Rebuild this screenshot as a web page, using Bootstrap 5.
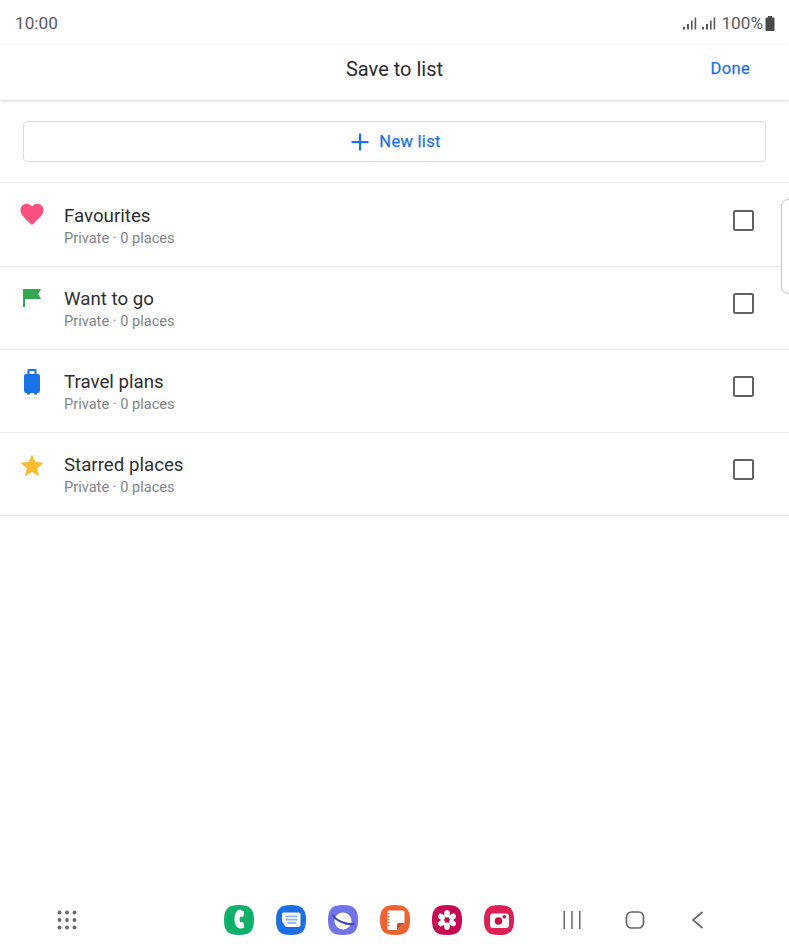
<!DOCTYPE html>
<html lang="en">
<head>
<meta charset="utf-8">
<title>Save to list</title>
<link href="https://cdn.jsdelivr.net/npm/bootstrap@5.3.0/dist/css/bootstrap.min.css" rel="stylesheet">
<style>
html,body{height:100%;}
body{font-family:Roboto,"Liberation Sans",sans-serif;color:#202124;background:#fff;overflow:hidden;}
.page-wrap{height:948px;position:relative;}
.status-bar{height:45px;padding:14px 14px 0 15px;color:#5a5a5a;font-size:17.2px;line-height:18px;}
.status-right{gap:5px;}
.top-bar{height:55px;padding:0 39px 7px 39px;position:relative;box-shadow:0 1px 3px rgba(60,64,67,.22);}
.title-text{font-size:20px;line-height:28px;color:#2a2c2f;position:absolute;left:0;right:0;top:10px;text-align:center;}
.done-link{font-size:16.5px;color:#1a73e8;letter-spacing:.35px;text-decoration:none;margin-left:auto;position:relative;-webkit-text-stroke:.25px #1a73e8;}
.new-wrap{padding:21px 23px 20px 23px;}
.new-btn{height:41px;border:1px solid #d8dade;border-radius:4px;background:#fff;color:#1a73e8;font-size:16.5px;gap:10px;width:100%;padding:1px 0 0 3px;letter-spacing:.3px;-webkit-text-stroke:.25px #1a73e8;}
.list-row{height:83px;border-top:1px solid #e6e6e6;padding:0 36px 0 0;}
.list-row.first-row{height:84px;}
.list-row.last-row{height:84px;border-bottom:1px solid #e6e6e6;}
.list-ico{width:64px;padding-left:20px;padding-top:19px;flex:none;height:100%;}
.first-row .list-ico,.last-row .list-ico{padding-top:20px;}
.list-body{padding-top:20px;}
.first-row .list-body{padding-top:21px;}
.list-name{font-size:18.7px;line-height:24px;color:#2d2f32;}
.list-sub{font-size:14.6px;line-height:20px;color:#80868b;}
.check-box{width:21px;height:21px;border:2.5px solid #5f6368;border-radius:2.5px;margin-top:-10px;margin-right:-1px;}
.first-row .check-box{margin-top:-8px;}
.edge-handle{position:absolute;right:-8px;top:199px;width:16px;height:95px;border:1px solid #c4c4c4;border-radius:7px;background:#fff;}
.dock{height:56px;padding:0 0 0 57px;position:absolute;bottom:0;left:0;right:0;}
.dots-ico{width:20px;flex:none;margin-right:147px;}
.apps-row{gap:22px;margin-right:26px;}
.nav-key{width:63px;flex:none;}
svg{display:block;}
</style>
</head>
<body>
<div class="page-wrap d-flex flex-column">
  <div class="status-bar d-flex justify-content-between align-items-start">
    <span>10:00</span>
    <div class="status-right d-flex align-items-center">
      <svg width="14" height="13" viewBox="0 0 14 13" fill="#5a5a5a"><rect x="0" y="10" width="2" height="2.5"/><rect x="4" y="7" width="2" height="5.5"/><rect x="8" y="3.5" width="1.6" height="9"/><rect x="11.6" y="0.5" width="1.6" height="12"/></svg>
      <svg width="14" height="13" viewBox="0 0 14 13" fill="#5a5a5a"><rect x="0" y="10" width="2" height="2.5"/><rect x="4" y="7" width="2" height="5.5"/><rect x="8" y="3.5" width="1.6" height="9"/><rect x="11.6" y="0.5" width="1.600" height="12"/></svg>
      <span>100%</span>
      <svg class="battery-ico" width="10" height="15" viewBox="0 0 10 15" fill="#4a4a4a" style="margin-left:-3px"><path d="M3 0h4v1.500h1.500q1 0 1 1V14q0 1-1 1h-7q-1 0-1-1V2.500q0-1 1-1H3z"/></svg>
    </div>
  </div>
  <div class="top-bar d-flex align-items-center">
    <div class="title-text">Save to list</div>
    <a class="done-link" href="#">Done</a>
  </div>
  <div class="new-wrap">
    <button type="button" class="btn new-btn d-flex align-items-center justify-content-center">
      <svg width="18" height="18" viewBox="0 0 18 18" fill="#1a73e8"><rect x="8" y="0.500" width="2.200" height="17"/><rect x="0.500" y="8" width="17" height="2.200"/></svg>
      <span>New list</span>
    </button>
  </div>
  <div class="list-row first-row d-flex">
    <div class="list-ico"><svg width="24" height="24" viewBox="0 0 24 24" fill="#f8507f"><path d="M12 23.500 10.300 21.900C4.200 16.400 0.500 13 0.500 8.600 0.500 5 3.300 2.300 6.800 2.300c2 0 3.900.9 5.200 2.400 1.300-1.500 3.200-2.400 5.200-2.400 3.500 0 6.300 2.700 6.300 6.300 0 4.400-3.700 7.800-9.800 13.300z" transform="translate(0 -1.500)"/></svg></div>
    <div class="list-body flex-grow-1"><div class="list-name">Favourites</div><div class="list-sub">Private · 0 places</div></div>
    <div class="align-self-center check-box"></div>
  </div>
  <div class="list-row d-flex">
    <div class="list-ico"><svg width="24" height="24" viewBox="0 0 24 24" fill="#34a853"><path d="M3 3h18l-2.700 5 2.700 5H5v8H3z"/></svg></div>
    <div class="list-body flex-grow-1"><div class="list-name">Want to go</div><div class="list-sub">Private · 0 places</div></div>
    <div class="align-self-center check-box"></div>
  </div>
  <div class="list-row d-flex">
    <div class="list-ico"><svg width="24" height="26" viewBox="0 0 24 26" fill="#1a73e8"><path fill-rule="evenodd" d="M8.500 0h7q1 0 1 1v4H18q2 0 2 2v15q0 2-2 2h-1v1.500h-3V24H10v1.500H7V24H6q-2 0-2-2V7q0-2 2-2h1.500V1q0-1 1-1zM9.500 2v3h5V2z"/></svg></div>
    <div class="list-body flex-grow-1"><div class="list-name">Travel plans</div><div class="list-sub">Private · 0 places</div></div>
    <div class="align-self-center check-box"></div>
  </div>
  <div class="list-row last-row d-flex">
    <div class="list-ico"><svg width="24" height="24" viewBox="0 0 24 24" fill="#fbbc2d"><path d="M12 1.500l3.200 7.600 8.300.7-6.300 5.400 1.900 8.100L12 19.100l-7.100 4.200 1.900-8.100L.5 9.800l8.300-.7z"/></svg></div>
    <div class="list-body flex-grow-1"><div class="list-name">Starred places</div><div class="list-sub">Private · 0 places</div></div>
    <div class="align-self-center check-box"></div>
  </div>
  <div class="edge-handle"></div>
  <div class="dock d-flex align-items-center">
    <div class="dots-ico">
      <svg width="20" height="20" viewBox="0 0 20 20" fill="#666"><circle cx="2.500" cy="2.500" r="1.900"/><circle cx="10" cy="2.500" r="1.900"/><circle cx="17.500" cy="2.500" r="1.900"/><circle cx="2.500" cy="10" r="1.900"/><circle cx="10" cy="10" r="1.900"/><circle cx="17.500" cy="10" r="1.900"/><circle cx="2.500" cy="17.500" r="1.900"/><circle cx="10" cy="17.500" r="1.900"/><circle cx="17.500" cy="17.500" r="1.900"/></svg>
    </div>
    <div class="apps-row d-flex">
      <svg width="30" height="30" viewBox="0 0 30 30"><path fill="#0fb06a" d="M15 0c11 0 15 4 15 15s-4 15-15 15S0 26 0 15 4 0 15 0z"/><path fill="#fff" d="M17 5.500l2.500.5q.7.2.7 1l-.6 4q-.1.8-1 .8l-2.600.2c-.5 1.500-.5 3.500 0 5l2.600.2q.9 0 1 .8l.6 4q0 .8-.7 1l-2.500.5c-4 .5-6.500-4-6.500-9.500s2.500-10 6.500-9.500z"/></svg>
      <svg width="30" height="30" viewBox="0 0 30 30"><path fill="#1a6fe6" d="M15 0c11 0 15 4 15 15s-4 15-15 15S0 26 0 15 4 0 15 0z"/><path fill="#fff" d="M6 9q0-1.500 1.500-1.500h15Q24.500 7.500 24.500 9v11q0 2-2 2H11q-1.500 0-2.200-1.300L6 16z"/><path fill="#8ab4f8" d="M9.500 10.500h12v1.700h-12zM9.500 13.800h12v1.700h-12zM11.500 17h8.500v1.700h-8.500z"/></svg>
      <svg width="30" height="30" viewBox="0 0 30 30"><path fill="#7074e6" d="M15 0c11 0 15 4 15 15s-4 15-15 15S0 26 0 15 4 0 15 0z"/><circle cx="15" cy="16" r="8.500" fill="#fff"/><path fill="none" stroke="#4346b4" stroke-width="2" stroke-linecap="round" d="M5 10.500C8 15.500 18 20 25.500 19"/></svg>
      <svg width="30" height="30" viewBox="0 0 30 30"><path fill="#ee6330" d="M15 0c11 0 15 4 15 15s-4 15-15 15S0 26 0 15 4 0 15 0z"/><path fill="#fff" d="M9 5.500h14q1.500 0 1.500 1.500v11L17 25H9q-1.500 0-1.500-1.500V7Q7.500 5.500 9 5.500z"/><path fill="#c8501f" d="M24.500 18L17 25v-5.500q0-1.500 1.500-1.500z"/><path fill="#ee6330" d="M7.500 8h2v1.300h-2zM7.500 11h2v1.300h-2zM7.500 14h2v1.300h-2zM7.500 17h2v1.300h-2zM7.500 20h2v1.300h-2z"/></svg>
      <svg width="30" height="30" viewBox="0 0 30 30"><path fill="#c70852" d="M15 0c11 0 15 4 15 15s-4 15-15 15S0 26 0 15 4 0 15 0z"/><g fill="#fff"><ellipse cx="15" cy="8.800" rx="2.900" ry="3.700"/><ellipse cx="15" cy="21.200" rx="2.900" ry="3.700"/><ellipse cx="15" cy="8.800" rx="2.900" ry="3.700" transform="rotate(60 15 15)"/><ellipse cx="15" cy="8.800" rx="2.900" ry="3.700" transform="rotate(120 15 15)"/><ellipse cx="15" cy="8.800" rx="2.900" ry="3.700" transform="rotate(240 15 15)"/><ellipse cx="15" cy="8.800" rx="2.900" ry="3.700" transform="rotate(300 15 15)"/></g><circle cx="15" cy="15" r="2" fill="#c70852"/></svg>
      <svg width="30" height="30" viewBox="0 0 30 30"><path fill="#e01f54" d="M15 0c11 0 15 4 15 15s-4 15-15 15S0 26 0 15 4 0 15 0z"/><rect x="6" y="8.500" width="19" height="14.500" rx="3" fill="#fff"/><circle cx="14.500" cy="16" r="3.800" fill="#c70f44"/><circle cx="20.300" cy="11.700" r="1.800" fill="#c70f44"/></svg>
    </div>
    <div class="d-flex">
      <div class="nav-key d-flex justify-content-center"><svg width="20" height="18" viewBox="0 0 20 18" fill="#666"><rect x="1.500" y="0" width="1.500" height="18"/><rect x="9.200" y="0" width="1.500" height="18"/><rect x="17" y="0" width="1.500" height="18"/></svg></div>
      <div class="nav-key d-flex justify-content-center"><svg width="20" height="18" viewBox="0 0 20 18" fill="none" stroke="#666" stroke-width="1.700"><rect x="1.500" y="1" width="17" height="16" rx="5"/></svg></div>
      <div class="nav-key d-flex justify-content-center"><svg width="20" height="18" viewBox="0 0 20 18" fill="none" stroke="#666" stroke-width="1.700"><path d="M14.500 1L5 9l9.500 8"/></svg></div>
    </div>
  </div>
</div>
<script src="https://cdn.jsdelivr.net/npm/bootstrap@5.3.0/dist/js/bootstrap.bundle.min.js"></script>
</body>
</html>
